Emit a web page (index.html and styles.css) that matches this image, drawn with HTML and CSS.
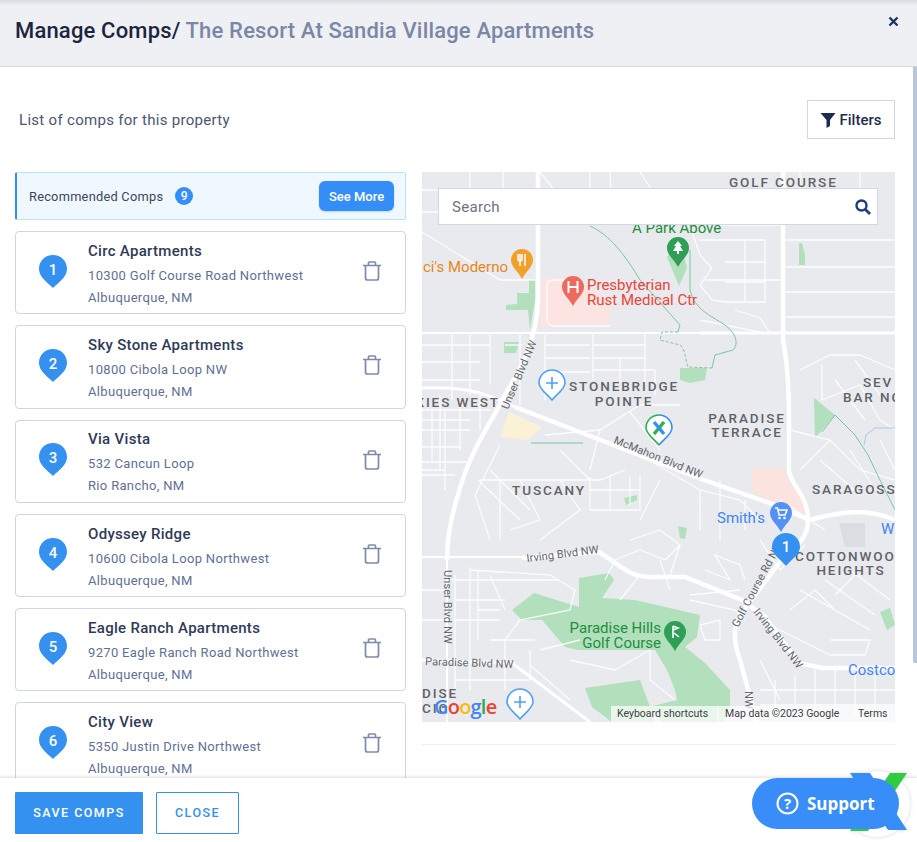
FILE: index.html
```html
<!DOCTYPE html>
<html lang="en">
<head>
    <meta charset="UTF-8">
    <meta name="viewport" content="width=device-width, initial-scale=1.0">
    <title>Manage Comps</title>
    <link rel="stylesheet" href="styles.css">
</head>
<body>
<div class="modal">
    <!-- Header -->
    <div class="modal-header">
        <h1 class="modal-title">Manage Comps/ <span class="modal-subtitle">The Resort At Sandia Village Apartments</span></h1>
        <svg class="close-icon" width="11" height="11" viewBox="0 0 11 11"><path d="M1.5 1.5L9.5 9.5M9.5 1.5L1.5 9.5" stroke="#1f3560" stroke-width="2.4" fill="none"/></svg>
    </div>

    <div class="modal-body">
        <div class="list-heading">
            <span class="list-label">List of comps for this property</span>
            <button class="filter-btn">
                <svg width="16" height="16" viewBox="0 0 16 16"><path d="M0.5 1H15.5L10 8V14L6.5 16V8Z" fill="#1d2c4d"/></svg>
                Filters
            </button>
        </div>

        <div class="columns">
            <div class="comp-column">
                <div class="recommended">
                    <span class="recommended-label">Recommended Comps</span>
                    <span class="count-badge">9</span>
                    <button class="see-more">See More</button>
                </div>

                <div class="comp-card">
                    <svg class="comp-pin" width="28" height="33" viewBox="0 0 28 33"><path d="M14 0C6 0 0 6 0 14c0 8 8 13 14 19c6-6 14-11 14-19C28 6 22 0 14 0z" fill="#3591ef"/><text x="14" y="20" class="pin-number">1</text></svg>
                    <div class="comp-info">
                        <div class="comp-name">Circ Apartments</div>
                        <div class="comp-address">10300 Golf Course Road Northwest</div>
                        <div class="comp-address">Albuquerque, NM</div>
                    </div>
                    <svg class="trash" width="20" height="20" viewBox="0 0 20 20"><path d="M1 4.5H19M6.5 4V2a1 1 0 0 1 1-1h5a1 1 0 0 1 1 1v2M3.5 5V17a2 2 0 0 0 2 2h9a2 2 0 0 0 2-2V5" stroke="#7d8aa8" stroke-width="1.7" fill="none"/></svg>
                </div>

                <div class="comp-card">
                    <svg class="comp-pin" width="28" height="33" viewBox="0 0 28 33"><path d="M14 0C6 0 0 6 0 14c0 8 8 13 14 19c6-6 14-11 14-19C28 6 22 0 14 0z" fill="#3591ef"/><text x="14" y="20" class="pin-number">2</text></svg>
                    <div class="comp-info">
                        <div class="comp-name">Sky Stone Apartments</div>
                        <div class="comp-address">10800 Cibola Loop NW</div>
                        <div class="comp-address">Albuquerque, NM</div>
                    </div>
                    <svg class="trash" width="20" height="20" viewBox="0 0 20 20"><path d="M1 4.5H19M6.5 4V2a1 1 0 0 1 1-1h5a1 1 0 0 1 1 1v2M3.5 5V17a2 2 0 0 0 2 2h9a2 2 0 0 0 2-2V5" stroke="#7d8aa8" stroke-width="1.7" fill="none"/></svg>
                </div>

                <div class="comp-card">
                    <svg class="comp-pin" width="28" height="33" viewBox="0 0 28 33"><path d="M14 0C6 0 0 6 0 14c0 8 8 13 14 19c6-6 14-11 14-19C28 6 22 0 14 0z" fill="#3591ef"/><text x="14" y="20" class="pin-number">3</text></svg>
                    <div class="comp-info">
                        <div class="comp-name">Via Vista</div>
                        <div class="comp-address">532 Cancun Loop</div>
                        <div class="comp-address">Rio Rancho, NM</div>
                    </div>
                    <svg class="trash" width="20" height="20" viewBox="0 0 20 20"><path d="M1 4.5H19M6.5 4V2a1 1 0 0 1 1-1h5a1 1 0 0 1 1 1v2M3.5 5V17a2 2 0 0 0 2 2h9a2 2 0 0 0 2-2V5" stroke="#7d8aa8" stroke-width="1.7" fill="none"/></svg>
                </div>

                <div class="comp-card">
                    <svg class="comp-pin" width="28" height="33" viewBox="0 0 28 33"><path d="M14 0C6 0 0 6 0 14c0 8 8 13 14 19c6-6 14-11 14-19C28 6 22 0 14 0z" fill="#3591ef"/><text x="14" y="20" class="pin-number">4</text></svg>
                    <div class="comp-info">
                        <div class="comp-name">Odyssey Ridge</div>
                        <div class="comp-address">10600 Cibola Loop Northwest</div>
                        <div class="comp-address">Albuquerque, NM</div>
                    </div>
                    <svg class="trash" width="20" height="20" viewBox="0 0 20 20"><path d="M1 4.5H19M6.5 4V2a1 1 0 0 1 1-1h5a1 1 0 0 1 1 1v2M3.5 5V17a2 2 0 0 0 2 2h9a2 2 0 0 0 2-2V5" stroke="#7d8aa8" stroke-width="1.7" fill="none"/></svg>
                </div>

                <div class="comp-card">
                    <svg class="comp-pin" width="28" height="33" viewBox="0 0 28 33"><path d="M14 0C6 0 0 6 0 14c0 8 8 13 14 19c6-6 14-11 14-19C28 6 22 0 14 0z" fill="#3591ef"/><text x="14" y="20" class="pin-number">5</text></svg>
                    <div class="comp-info">
                        <div class="comp-name">Eagle Ranch Apartments</div>
                        <div class="comp-address">9270 Eagle Ranch Road Northwest</div>
                        <div class="comp-address">Albuquerque, NM</div>
                    </div>
                    <svg class="trash" width="20" height="20" viewBox="0 0 20 20"><path d="M1 4.5H19M6.5 4V2a1 1 0 0 1 1-1h5a1 1 0 0 1 1 1v2M3.5 5V17a2 2 0 0 0 2 2h9a2 2 0 0 0 2-2V5" stroke="#7d8aa8" stroke-width="1.7" fill="none"/></svg>
                </div>

                <div class="comp-card">
                    <svg class="comp-pin" width="28" height="33" viewBox="0 0 28 33"><path d="M14 0C6 0 0 6 0 14c0 8 8 13 14 19c6-6 14-11 14-19C28 6 22 0 14 0z" fill="#3591ef"/><text x="14" y="20" class="pin-number">6</text></svg>
                    <div class="comp-info">
                        <div class="comp-name">City View</div>
                        <div class="comp-address">5350 Justin Drive Northwest</div>
                        <div class="comp-address">Albuquerque, NM</div>
                    </div>
                    <svg class="trash" width="20" height="20" viewBox="0 0 20 20"><path d="M1 4.5H19M6.5 4V2a1 1 0 0 1 1-1h5a1 1 0 0 1 1 1v2M3.5 5V17a2 2 0 0 0 2 2h9a2 2 0 0 0 2-2V5" stroke="#7d8aa8" stroke-width="1.7" fill="none"/></svg>
                </div>
            </div>

            <div class="map-column">
                <div class="map">
                    <svg class="map-art" width="473" height="550" viewBox="422 172 473 550">
                        <rect x="422" y="172" width="473" height="550" fill="#e8eaed"/>

                        <!-- areas -->
                        <g fill="#b2dfbc">
                            <path d="M512 610L534 593L579 607V578L609 573L614 580L602 598L635 600L700 615L697 637L685 647L705 663L730 690V707L722 722H662L649 707L677 700L675 690L667 670L655 650H579L565 647L542 620H522Z"/>
                            <path d="M585 688L640 680L650 707L655 722H612L592 707Z"/>
                            <path d="M667 257L680 240L687 268L679 286Z"/>
                            <path d="M506 305L517 304V293L529 293V280L535 280V300L530 330L528 310H506Z"/>
                            <path d="M504 342H519L516 353H504Z"/>
                            <path d="M680 368H707L705 380L690 383L680 380Z"/>
                            <path d="M799 243H802L805 255V265H799Z"/>
                            <path d="M814 398L835 415L815 438Z"/>
                            <path d="M678 526L687 528L685 539L680 538Z"/>
                            <path d="M624 498L637 495L637 500L626 505Z"/>
                            <path d="M880 612L890 608L895 625L887 630Z"/>
                        </g>
                        <path d="M542 278H575L610 300V327H540Z" fill="#fbe4e2"/>
                        <path d="M752 468H784L789 483L804 500V513L775 503L752 492Z" fill="#fbe4e0"/>
                        <path d="M509 412L542 427L528 440L500 437Z" fill="#fbf1d6"/>
                        <path d="M839 523H865V547H845Z" fill="#dcdde2"/>

                        <!-- small streets -->
                        <path class="street" d="M422 212H535M422 190H535M470 172V212M503 172V212M422 232L500 280H535M422 345H490M422 362H480M422 380H480M452 333V400M470 333V395M490 333V385M505 345H522M520 333V405M545 335V400M545 345H590M545 358H590M545 372H590M593 333V380M593 345H645M593 358H645M593 370H655M645 333V385M620 358V383M655 370V395M560 197L540 172M590 172V220M610 172L612 225M640 172L675 225M547 285V320Q548 326 555 326H610M547 285Q547 280 555 280H575"/>
                        <path class="street" d="M700 240H765V302H725M745 240V302M725 262H765M725 282H765M692 232L700 255L712 268L700 285L712 300L725 302M700 225H780M800 172V225M860 172V225M785 240H895M785 267H895M785 292H895M785 317H895M700 320L765 333M735 310L760 318L770 333M705 280H785"/>
                        <path class="street" d="M800 370L830 355H860L895 370M822 365V400M822 400L860 385L880 420L895 430M835 380L865 420M855 360L880 395M790 430L830 440L860 470L895 480M820 460L860 495M830 440L800 470M880 440L895 470M850 450L875 490"/>
                        <path class="street" d="M422 470H445M422 430H470M422 447H460M422 410H490M440 395V470M460 400V450M480 395V430M432 410V460M422 420H470M445 410V490M422 462H470M422 475H455M545 435L600 430L640 405H680M600 430L590 470M630 412L660 450M560 450L590 480M500 445L475 495L490 540M480 480H600L625 470M500 480V540M520 480L540 520L510 530M560 480L580 510L540 540M590 477V510M610 477V510M630 477V505M590 490H640M590 510H625M640 475V510H625M660 480L640 520M640 455L700 490L740 500L760 520M720 480V540M700 490V530M745 500V530M478 480L520 520M490 470L530 510"/>
                        <path class="street" d="M630 540L660 530L680 545L665 560L640 550L615 560L605 580M680 545L670 575M660 560L670 590M640 575L620 600M705 570L730 580L715 555L740 565L745 580M690 600L735 610L745 620M690 595L740 590M700 625L720 620V640H705L700 625M780 500L825 530M760 540L780 570L805 545M800 590L835 610L870 630M790 610L815 590L835 610M770 625L830 655M830 640H870L865 655H830M825 580L875 615M850 570L890 600M835 595L860 570"/>
                        <path class="street" d="M470 570L550 575L575 590L570 610L520 620L505 640V690M447 580H560M478 570V640M478 610H500M422 590H447M422 620H447M455 680H530M540 650L580 640M570 660L615 670L650 650M650 650V680L675 700M760 660L780 700M760 690H895M775 680V716M795 675V716M815 670V716M835 670V716M855 672V716M875 672V716M760 705H895M455 575V690M470 567V690M455 600H505M455 620H500M490 575L505 610M490 640L535 640M530 665L570 700M530 650V680"/>

                        <!-- main roads -->
                        <path class="road" d="M538 172V300C537 340 520 370 505 395C490 425 470 450 458 495C450 520 447 540 447 560"/>
                        <path class="road-thin" d="M447 560V722"/>
                        <path class="road-thin" d="M422 333H700"/>
                        <path class="road-mid" d="M700 333H895"/>
                        <path class="road" d="M783 172V340C787 360 789 380 789 420V470C790 485 808 495 808 520C808 535 800 545 785 555L740 615C733 628 733 640 740 660L757 722"/>
                        <path class="road-mid" d="M422 388C470 386 490 395 515 407"/>
                        <path class="road" d="M515 407L704 480L775 505L809 520C830 515 860 505 895 520"/>
                        <path class="road-thin" d="M422 557H522"/>
                        <path class="road" d="M522 558L599 552C620 565 630 577 649 577H685L742 600L765 617L799 663L822 668H895"/>
                        <path class="road-mid" d="M422 660L512 663L590 722"/>

                        <!-- trails -->
                        <path class="trail" d="M590 226C610 235 625 255 640 280L680 325L678 332M690 250V290C695 310 710 315 725 325C738 335 738 345 733 350L715 355L712 368M822 432L835 415L855 435L868 455L880 480L895 510"/>
                        <path class="trail-dash" d="M678 332H662L660 340L680 345C686 350 685 360 688 367L712 368"/>
                        <path class="trail" d="M531 443H583"/>
                        <path class="stream" d="M864 445L866 435L875 428H895"/>

                        <!-- labels -->
                        <text x="729" y="187" class="area">GOLF COURSE</text>
                        <text x="632" y="233" class="poi green">A Park Above</text>
                        <text x="508" y="272" class="poi orange" text-anchor="end">ci's Moderno</text>
                        <text x="587" y="290" class="poi red">Presbyterian</text>
                        <text x="587" y="305" class="poi red">Rust Medical Ctr</text>
                        <text class="street-name" transform="translate(508 410) rotate(-67)">Unser Blvd NW</text>
                        <text x="624" y="391" class="area" text-anchor="middle">STONEBRIDGE</text>
                        <text x="624" y="406" class="area" text-anchor="middle">POINTE</text>
                        <text x="500" y="407" class="area" text-anchor="end">KIES WEST</text>
                        <text x="747" y="423" class="area" text-anchor="middle">PARADISE</text>
                        <text x="747" y="437" class="area" text-anchor="middle">TERRACE</text>
                        <text x="863" y="387" class="area">SEV</text>
                        <text x="843" y="402" class="area">BAR NO</text>
                        <text class="street-name" transform="translate(613 443) rotate(22)">McMahon Blvd NW</text>
                        <text x="549" y="495" class="area" text-anchor="middle">TUSCANY</text>
                        <text x="812" y="494" class="area">SARAGOSS</text>
                        <text x="717" y="523" class="poi blue">Smith's</text>
                        <text x="881" y="534" class="poi blue">W</text>
                        <text x="795" y="561" class="area">COTTONWOO</text>
                        <text x="851" y="575" class="area" text-anchor="middle">HEIGHTS</text>
                        <text class="street-name" transform="translate(527 562) rotate(-7)">Irving Blvd NW</text>
                        <text class="street-name" transform="translate(738 628) rotate(-62)">Golf Course Rd NW</text>
                        <text class="street-name" transform="translate(753 612) rotate(52)">Irving Blvd NW</text>
                        <text class="street-name" transform="translate(444 570) rotate(90)">Unser Blvd NW</text>
                        <text class="street-name" transform="translate(425 665) rotate(2)">Paradise Blvd NW</text>
                        <text class="street-name" transform="translate(745 691) rotate(90)">NW</text>
                        <text x="661" y="633" class="poi green" text-anchor="end">Paradise Hills</text>
                        <text x="661" y="648" class="poi green" text-anchor="end">Golf Course</text>
                        <text x="848" y="675" class="poi blue">Costco</text>
                        <text x="422" y="698" class="area">DISE</text>
                        <text x="422" y="713" class="area">CIC</text>

                        <!-- pins -->
                        <g transform="translate(522 260)"><path d="M0-11a11 11 0 0 1 11 11c0 7-7 11-11 19c-4-8-11-12-11-19a11 11 0 0 1 11-11z" fill="#f1a02b"/><path d="M-4-6V-1a2 2 0 0 0 4 0V-6M-2-6V6M3-6V6" stroke="#fff" stroke-width="1.5" fill="none"/></g>
                        <g transform="translate(573 287)"><path d="M0-11a11 11 0 0 1 11 11c0 7-7 11-11 19c-4-8-11-12-11-19a11 11 0 0 1 11-11z" fill="#ec6a5e"/><path d="M-4.5-6V6M4.5-6V6M-4.5 0H4.5" stroke="#fff" stroke-width="2" fill="none"/></g>
                        <g transform="translate(678 248)"><path d="M0-11a11 11 0 0 1 11 11c0 7-7 11-11 19c-4-8-11-12-11-19a11 11 0 0 1 11-11z" fill="#2f9e57"/><path d="M0-7L4-2H2L5 3H1V6H-1V3H-5L-2-2H-4Z" fill="#fff"/></g>
                        <g transform="translate(781 513)"><path d="M0-11a11 11 0 0 1 11 11c0 7-7 11-11 19c-4-8-11-12-11-19a11 11 0 0 1 11-11z" fill="#5491f5"/><path d="M-6-5H-3.5L-2 2H4L6-3H-3" stroke="#fff" stroke-width="1.5" fill="none"/><circle cx="-1.5" cy="5" r="1.3" fill="#fff"/><circle cx="3.5" cy="5" r="1.3" fill="#fff"/></g>
                        <g transform="translate(675 632)"><path d="M0-11a11 11 0 0 1 11 11c0 7-7 11-11 19c-4-8-11-12-11-19a11 11 0 0 1 11-11z" fill="#2f9e57"/><path d="M-2-6V6M-2-6L3-4L-2-2M-1 1L4 5" stroke="#fff" stroke-width="1.6" fill="none"/></g>

                        <g transform="translate(552 383)"><path d="M0-13a13 13 0 0 1 13 13c0 6-8 11-13 17c-5-6-13-11-13-17a13 13 0 0 1 13-13z" fill="#fff" stroke="#4ea1f0" stroke-width="1.6"/><path d="M-6 0H6M0-6V6" stroke="#4ea1f0" stroke-width="1.6"/></g>
                        <g transform="translate(520 702)"><path d="M0-13a13 13 0 0 1 13 13c0 6-8 11-13 17c-5-6-13-11-13-17a13 13 0 0 1 13-13z" fill="#fff" stroke="#4ea1f0" stroke-width="1.6"/><path d="M-6 0H6M0-6V6" stroke="#4ea1f0" stroke-width="1.6"/></g>
                        <g transform="translate(659 428)"><path d="M0-13a13 13 0 0 1 13 13c0 6-8 11-13 17c-5-6-13-11-13-17a13 13 0 0 1 13-13z" fill="#fff"/><path d="M0-13a13 13 0 0 0-13 13c0 6 8 11 13 17" fill="none" stroke="#2ab24c" stroke-width="1.6"/><path d="M0-13a13 13 0 0 1 13 13c0 6-8 11-13 17" fill="none" stroke="#3591ef" stroke-width="1.6"/><path d="M5-6L-5 6" stroke="#2ab24c" stroke-width="3.4"/><path d="M-5-6L5 6" stroke="#3591ef" stroke-width="3.4"/></g>
                        <g transform="translate(786 547)"><path d="M0-14a14 14 0 0 1 14 14c0 7-8 12-14 19c-6-7-14-12-14-19a14 14 0 0 1 14-14z" fill="#3591ef"/><text x="0" y="5" class="pin-number">1</text></g>

                        <!-- google logo and attribution -->
                        <text x="434" y="714" class="google"><tspan fill="#4285f4">G</tspan><tspan fill="#ea4335">o</tspan><tspan fill="#fbbc05">o</tspan><tspan fill="#4285f4">g</tspan><tspan fill="#34a853">l</tspan><tspan fill="#ea4335">e</tspan></text>
                        <rect x="611" y="706" width="284" height="16" fill="#fff" opacity="0.7"/>
                        <path d="M718 706V722" stroke="#fff"/>
                        <text x="617" y="717" class="attribution">Keyboard shortcuts</text>
                        <text x="725" y="717" class="attribution">Map data ©2023 Google</text>
                        <text x="858" y="717" class="attribution">Terms</text>
                    </svg>

                    <div class="map-search">
                        <span>Search</span>
                        <svg width="16" height="16" viewBox="0 0 16 16"><circle cx="6.5" cy="6.5" r="5" stroke="#1f3f7a" stroke-width="2.4" fill="none"/><path d="M10.2 10.2L15 15" stroke="#1f3f7a" stroke-width="2.8"/></svg>
                    </div>
                </div>
                <div class="map-rule"></div>
            </div>
        </div>
    </div>

    <!-- Footer buttons -->
    <div class="modal-footer">
        <button class="btn-save">SAVE COMPS</button>
        <button class="btn-close">CLOSE</button>
    </div>
</div>

<div class="scroll-thumb"></div>

<!-- Support widget -->
<div class="support">
    <svg class="support-logo" width="68" height="74" viewBox="0 0 68 74">
        <circle cx="27" cy="36" r="33" fill="#fff"/>
        <path d="M40 5H57L18 63H0Z" fill="#2ecc40"/>
        <path d="M0 5H20L57 62H38Z" fill="#358ef8"/>
    </svg>
    <div class="support-btn">
        <svg width="23" height="23" viewBox="0 0 23 23"><circle cx="11.5" cy="11.5" r="10" stroke="#fff" stroke-width="2" fill="none"/><text x="11.5" y="16.5" class="support-mark">?</text></svg>
        Support
    </div>
</div>
</body>
</html>
```

FILE: styles.css
```css
html, body {
    height: 100%;
    margin: 0;
    overflow: hidden;
}

body {
    font-family: Roboto, "Liberation Sans", sans-serif;
    background-color: #ffffff;
}

button {
    font-family: inherit;
    cursor: pointer;
}

.modal {
    height: 100%;
    display: flex;
    flex-direction: column;
}

/* Header */
.modal-header {
    height: 66px;
    flex-shrink: 0;
    display: flex;
    justify-content: space-between;
    background: linear-gradient(#d9dbe0, #eff0f4 6px);
    border-bottom: 1px solid #ced6e0;
}

.modal-title {
    margin: 0;
    padding: 17px 0 0 15px;
    font-size: 22px;
    line-height: 28px;
    font-weight: 500;
    letter-spacing: 0.17px;
    color: #1b2540;
}

.modal-subtitle {
    color: #7a87a6;
}

.close-icon {
    margin: 16px 18px 0 0;
}

/* Body */
.modal-body {
    flex: 1;
    min-height: 0;
    overflow: hidden;
    padding: 0 22px 0 15px;
}

.list-heading {
    display: flex;
    justify-content: space-between;
    align-items: center;
    margin-top: 33px;
    padding-left: 4px;
}

.list-label {
    font-size: 15px;
    letter-spacing: 0.3px;
    color: #4a5672;
}

.filter-btn {
    width: 88px;
    height: 39px;
    display: flex;
    align-items: center;
    justify-content: center;
    gap: 4px;
    padding: 0 1px 0 0;
    background: #ffffff;
    border: 1px solid #cfd8e3;
    font-size: 15px;
    font-weight: 500;
    color: #1d2c4d;
}

.columns {
    display: flex;
    gap: 16px;
    margin-top: 33px;
}

/* Comp list */
.comp-column {
    width: 391px;
    flex-shrink: 0;
}

.recommended {
    height: 48px;
    box-sizing: border-box;
    display: flex;
    align-items: center;
    padding: 0 11px 0 12px;
    margin-bottom: 11px;
    background-color: #f0f8ff;
    border: 1px solid #bbe1fb;
    border-left: 2px solid #358ef8;
    border-radius: 2px;
}

.recommended-label {
    font-size: 12.8px;
    letter-spacing: 0.25px;
    color: #3c4660;
}

.count-badge {
    width: 18px;
    height: 18px;
    margin-left: 12px;
    border-radius: 50%;
    background-color: #358ef8;
    color: #ffffff;
    font-size: 12px;
    font-weight: 500;
    line-height: 18px;
    text-align: center;
}

.see-more {
    width: 75px;
    height: 30px;
    margin-left: auto;
    padding: 0;
    border: none;
    border-radius: 6px;
    background-color: #358ef8;
    box-shadow: 0 1px 2px rgba(53, 142, 248, 0.3);
    color: #ffffff;
    font-size: 13px;
    font-weight: 500;
}

.comp-card {
    height: 83.3px;
    box-sizing: border-box;
    display: flex;
    align-items: center;
    margin-bottom: 11px;
    padding: 0 23px 0 23px;
    background: #ffffff;
    border: 1px solid #ced6e0;
    border-radius: 4px;
}

.comp-pin {
    flex-shrink: 0;
    margin-bottom: 3px;
}

.comp-info {
    flex: 1;
    margin-left: 21px;
    padding-top: 3px;
}

.comp-name {
    font-size: 15px;
    font-weight: 500;
    letter-spacing: 0.3px;
    line-height: 22px;
    margin-bottom: 3px;
    color: #2f3a58;
}

.comp-address {
    font-size: 13px;
    letter-spacing: 0.33px;
    line-height: 22px;
    color: #5f7094;
}

.trash {
    flex-shrink: 0;
    margin-bottom: 3px;
}

.pin-number {
    font-family: Roboto, sans-serif;
    font-size: 15px;
    font-weight: 500;
    fill: #ffffff;
    text-anchor: middle;
}

/* Map */
.map-column {
    flex: 1;
    min-width: 0;
}

.map {
    position: relative;
    height: 550px;
}

.map-art {
    display: block;
}

.map-rule {
    height: 1px;
    margin-top: 22px;
    background-color: #eceef3;
}

.map-search {
    position: absolute;
    top: 16px;
    left: 16px;
    width: 440px;
    height: 37px;
    box-sizing: border-box;
    display: flex;
    align-items: center;
    justify-content: space-between;
    padding: 0 6px 0 13px;
    background: #ffffff;
    border: 1px solid #cfd8e3;
    font-size: 15px;
    letter-spacing: 0.3px;
    color: #6c7280;
}

.street {
    fill: none;
    stroke: #ffffff;
    stroke-width: 1.3;
    opacity: 0.85;
}

.road, .road-mid, .road-thin {
    fill: none;
    stroke: #ffffff;
}

.road { stroke-width: 4.5; }
.road-mid { stroke-width: 3; }
.road-thin { stroke-width: 2; }

.trail {
    fill: none;
    stroke: #7ec698;
    stroke-width: 1;
}

.trail-dash {
    fill: none;
    stroke: #7ec698;
    stroke-width: 1;
    stroke-dasharray: 3 2;
}

.stream {
    fill: none;
    stroke: #a5c8f0;
    stroke-width: 1;
}

.area {
    font-family: Roboto, sans-serif;
    font-size: 13.5px;
    font-weight: 500;
    letter-spacing: 1.9px;
    fill: #5f6368;
}

.poi {
    font-family: Roboto, sans-serif;
    font-size: 15px;
}

.green { fill: #1e8e3e; }
.orange { fill: #e8861a; }
.red { fill: #e8453c; }
.blue { fill: #4285f4; }

.street-name {
    font-family: Roboto, sans-serif;
    font-size: 11px;
    letter-spacing: 0.1px;
    fill: #62666c;
}

.google {
    font-family: "Open Sans", sans-serif;
    font-size: 20px;
    font-weight: 600;
    letter-spacing: -0.8px;
}

.attribution {
    font-family: Roboto, sans-serif;
    font-size: 10.5px;
    fill: #3c4043;
}

/* Footer */
.modal-footer {
    height: 64px;
    flex-shrink: 0;
    box-sizing: border-box;
    display: flex;
    gap: 13px;
    padding: 14px 0 0 15px;
    background: #ffffff;
    box-shadow: 0 -1px 3px rgba(0, 0, 0, 0.14);
    position: relative;
}

.btn-save, .btn-close {
    height: 42px;
    padding: 0 0 1px 0;
    font-size: 12.5px;
    font-weight: 500;
    letter-spacing: 1.45px;
    border-radius: 1px;
}

.btn-save {
    width: 128px;
    border: none;
    background-color: #3591ef;
    color: #ffffff;
}

.btn-close {
    width: 83px;
    background: #ffffff;
    border: 1px solid #3591ef;
    color: #3591ef;
}

.scroll-thumb {
    position: absolute;
    top: 67px;
    right: 0;
    width: 4px;
    height: 596px;
    background-color: #bcc6da;
    border-radius: 0 0 0 2px;
}

/* Support widget */
.support {
    position: absolute;
    top: 768px;
    left: 752px;
    width: 165px;
    height: 74px;
}

.support-logo {
    position: absolute;
    top: 0;
    left: 98px;
    filter: drop-shadow(0 0 2px rgba(0, 0, 0, 0.15));
}

.support-btn {
    position: absolute;
    top: 10px;
    left: 0;
    width: 147px;
    height: 51px;
    box-sizing: border-box;
    display: flex;
    align-items: center;
    gap: 8px;
    padding-left: 24px;
    border-radius: 26px;
    background-color: #388df9;
    color: #ffffff;
    font-family: "Open Sans", sans-serif;
    font-size: 17px;
    font-weight: 700;
}

.support-mark {
    font-family: "Open Sans", sans-serif;
    font-size: 15px;
    font-weight: 700;
    fill: #ffffff;
    text-anchor: middle;
}
```
